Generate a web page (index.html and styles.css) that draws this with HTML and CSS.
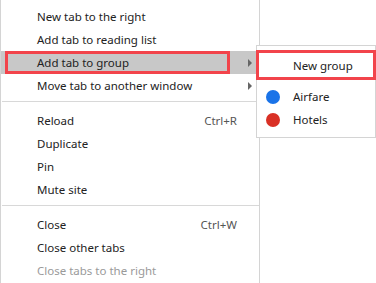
FILE: index.html
```html
<!DOCTYPE html>
<html>
<head>
<meta charset="utf-8">
<link rel="stylesheet" href="styles.css">
</head>
<body>
<div class="menu">
  <div class="item">New tab to the right</div>
  <div class="item">Add tab to reading list</div>
  <div class="item selected">Add tab to group<span class="arrow"></span></div>
  <div class="item">Move tab to another window<span class="arrow"></span></div>
  <div class="sep"></div>
  <div class="item">Reload<span class="key">Ctrl+R</span></div>
  <div class="item">Duplicate</div>
  <div class="item">Pin</div>
  <div class="item">Mute site</div>
  <div class="sep"></div>
  <div class="item">Close<span class="key">Ctrl+W</span></div>
  <div class="item">Close other tabs</div>
  <div class="item disabled">Close tabs to the right</div>
</div>
<div class="submenu">
  <div class="sitem newgroup">New group</div>
  <div class="sitem"><span class="dot blue"></span>Airfare</div>
  <div class="sitem"><span class="dot red"></span>Hotels</div>
</div>
</body>
</html>
```
FILE: styles.css
```css
html, body {
  margin: 0;
  padding: 0;
  background: #fff;
}
body {
  width: 376px;
  height: 283px;
  position: relative;
  overflow: hidden;
  font-family: "Noto Sans", "Open Sans", sans-serif;
  font-size: 11.5px;
  color: #222;
}
.menu {
  box-sizing: border-box;
  width: 260px;
  margin-top: -1px;
  border: 1px solid #d4d4d4;
  padding: 5px 0 1px 0;
  display: flex;
  flex-direction: column;
}
.item {
  height: 23px;
  display: flex;
  align-items: center;
  padding-left: 36px;
  position: relative;
}
.item.selected {
  background: #c8c8c8;
}
.item.selected::after {
  content: "";
  position: absolute;
  left: 4px;
  top: 0;
  width: 225px;
  height: 23px;
  border: 3px solid #f2444b;
  box-sizing: border-box;
}
.item.disabled {
  color: #9a9a9a;
}
.key {
  position: absolute;
  right: 22px;
  color: #555;
}
.arrow {
  position: absolute;
  right: 7px;
  top: 8px;
  width: 0;
  height: 0;
  border-top: 4px solid transparent;
  border-bottom: 4px solid transparent;
  border-left: 4px solid #666;
}
.sep {
  height: 1px;
  background: #d8d8d8;
  margin: 4px 0 7px 1px;
}
.submenu {
  position: absolute;
  left: 256px;
  top: 45px;
  width: 120px;
  height: 93px;
  box-sizing: border-box;
  border: 1px solid #d4d4d4;
  background: #fff;
  padding-top: 4px;
}
.sitem {
  height: 23px;
  display: flex;
  align-items: center;
  padding-left: 36px;
  position: relative;
}
.sitem.newgroup {
  height: 30px;
  margin-left: -1px;
  margin-right: -1px;
  border: 3px solid #f2444b;
  box-sizing: border-box;
  padding-left: 34px;
  margin-bottom: 5px;
}
.dot {
  position: absolute;
  left: 9px;
  width: 14px;
  height: 14px;
  border-radius: 50%;
}
.dot.blue { background: #1a73e8; }
.dot.red { background: #d93025; }
```
